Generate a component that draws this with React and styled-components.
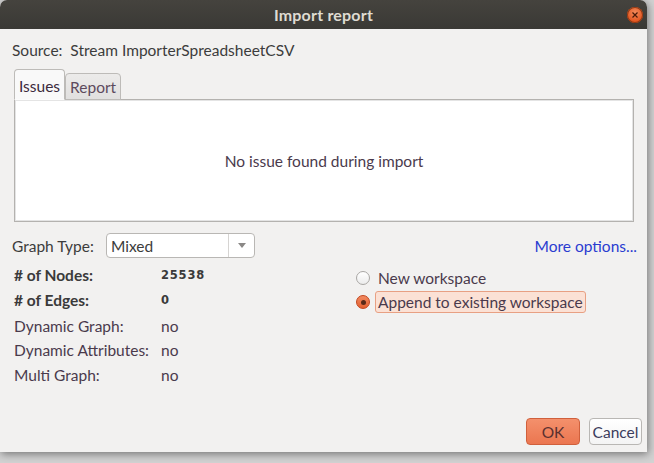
import React from "react";
import styled, { createGlobalStyle } from "styled-components";

const GlobalStyle = createGlobalStyle`
  html, body {
    margin: 0;
    padding: 0;
    background: #d2d2d2;
  }
  body {
    width: 654px;
    height: 463px;
    overflow: hidden;
    font-family: "Lato", "Noto Sans", sans-serif;
    color: #3c3c3c;
  }
`;

const Window = styled.div`
  width: 647px;
  height: 452px;
  display: flex;
  flex-direction: column;
  background: #f2f1f0;
  border-radius: 7px 7px 0 0;
  overflow: hidden;
  box-shadow: 1px 2px 8px rgba(0, 0, 0, 0.45);
`;

const TitleBar = styled.div`
  position: relative;
  height: 29px;
  flex: none;
  display: flex;
  align-items: center;
  justify-content: center;
  background: linear-gradient(#45433e, #3a3935);
  color: #dfdbd2;
  font-weight: 700;
  font-size: 16px;
  letter-spacing: 0.2px;
`;

const CloseButton = styled.div`
  position: absolute;
  right: 4px;
  top: 7px;
  width: 16px;
  height: 16px;
  border-radius: 50%;
  background: radial-gradient(circle at 50% 35%, #f28b5c, #e3541e 70%);
  box-shadow: 0 0 0 1px #8d3a16 inset;
  display: flex;
  align-items: center;
  justify-content: center;
`;

const Body = styled.div`
  flex: 1;
  display: flex;
  flex-direction: column;
  padding: 12px 5px 7px 12px;
  font-size: 15.5px;
`;

const Source = styled.div`
  height: 18px;
  line-height: 18px;
`;

const TabBar = styled.div`
  display: flex;
  align-items: flex-end;
  margin: 9px 0 0 2px;
  height: 31px;
`;

const Tab = styled.div`
  height: ${(p) => (p.active ? "31px" : "27px")};
  padding: 0 4px;
  display: flex;
  align-items: center;
  padding-top: ${(p) => (p.active ? "2px" : "0")};
  box-sizing: border-box;
  border: 1px solid #bdbbb8;
  border-bottom: ${(p) => (p.active ? "1px solid #fbfbfb" : "1px solid #bdbbb8")};
  border-radius: 4px 4px 0 0;
  background: ${(p) => (p.active ? "#f9f9f9" : "linear-gradient(#ecebea, #e1e0df)")};
  color: ${(p) => (p.active ? "#3c2a3c" : "#5d4a5d")};
  margin-bottom: -1px;
  z-index: ${(p) => (p.active ? 1 : 0)};
`;

const Panel = styled.div`
  margin-left: 2px;
  width: 620px;
  height: 123px;
  box-sizing: border-box;
  background: #ffffff;
  border: 1px solid #b4b2af;
  box-shadow: inset 0 0 0 1px #e4e4e4;
  display: flex;
  align-items: center;
  justify-content: center;
  color: #4a3a4c;
`;

const TypeRow = styled.div`
  display: flex;
  align-items: center;
  margin-top: 11px;
  height: 25px;
`;

const TypeLabel = styled.span`
  width: 94px;
`;

const Combo = styled.div`
  width: 149px;
  height: 25px;
  box-sizing: border-box;
  display: flex;
  background: #fff;
  border: 1px solid #b9b7b4;
  border-radius: 4px;
`;

const ComboText = styled.div`
  flex: 1;
  padding-left: 4px;
  display: flex;
  align-items: center;
  border-right: 1px solid #d6d4d2;
`;

const ComboArrow = styled.div`
  width: 25px;
  display: flex;
  align-items: center;
  justify-content: center;
`;

const MoreLink = styled.a`
  margin-left: auto;
  margin-right: 5px;
  color: #2a3cd0;
  text-decoration: none;
`;

const InfoArea = styled.div`
  display: flex;
  margin-top: 5px;
`;

const InfoGrid = styled.div`
  margin-left: 2px;
  width: 342px;
  display: grid;
  grid-template-columns: 147px 1fr;
  grid-auto-rows: 24.5px;
  align-items: center;
`;

const Label = styled.span`
  font-weight: ${(p) => (p.bold ? 700 : 400)};
  color: ${(p) => (p.bold ? "#3a3a3a" : "#4a3a4c")};
  margin-top: ${(p) => p.shift || 0}px;
`;

const Value = styled.span`
  font-weight: ${(p) => (p.bold ? 700 : 400)};
  font-size: ${(p) => (p.bold ? "11.5px" : "15.5px")};
  letter-spacing: ${(p) => (p.bold ? "0.8px" : "0")};
  font-family: ${(p) => (p.bold ? '"DejaVu Sans", sans-serif' : "inherit")};
  color: ${(p) => (p.bold ? "#3a3a3a" : "#4a3a4c")};
  margin-top: ${(p) => p.shift || 0}px;
`;

const RadioGroup = styled.div`
  display: flex;
  flex-direction: column;
  gap: 2px;
  padding-top: 4px;
`;

const RadioRow = styled.label`
  display: flex;
  align-items: center;
  height: 22px;
`;

const RadioDot = styled.span`
  width: 14px;
  height: 14px;
  box-sizing: border-box;
  border-radius: 50%;
  margin-right: 7px;
  flex: none;
  display: flex;
  align-items: center;
  justify-content: center;
  border: 1px solid ${(p) => (p.checked ? "#c2451d" : "#a9a7a4")};
  background: ${(p) => (p.checked ? "linear-gradient(#f28a62, #e3602f)" : "linear-gradient(#ffffff, #ececec)")};

  &::after {
    content: "";
    display: ${(p) => (p.checked ? "block" : "none")};
    width: 5px;
    height: 5px;
    border-radius: 50%;
    background: #5a2a18;
  }
`;

const RadioText = styled.span`
  padding: 1px 2px;
  margin-left: -2px;
  border-radius: 3px;
  color: #4a3a4c;
  border: 1px solid ${(p) => (p.focused ? "#e8a083" : "transparent")};
  background: ${(p) => (p.focused ? "#fbe1d5" : "transparent")};
`;

const Footer = styled.div`
  margin-top: auto;
  display: flex;
  justify-content: flex-end;
  gap: 9px;
`;

const Button = styled.button`
  height: 27px;
  width: ${(p) => (p.primary ? "54px" : "53px")};
  padding: 0;
  font-family: inherit;
  font-size: 15.5px;
  border-radius: 4px;
  border: 1px solid ${(p) => (p.primary ? "#d0603c" : "#b9b7b4")};
  background: ${(p) => (p.primary ? "linear-gradient(#f4906c, #eb7650)" : "linear-gradient(#ffffff, #f4f4f4)")};
  color: ${(p) => (p.primary ? "#5a3030" : "#3c3c5c")};
`;

function App() {
  return (
    <>
      <GlobalStyle />
      <Window>
        <TitleBar>
          Import report
          <CloseButton>
            <svg width="8" height="8" viewBox="0 0 8 8">
              <path d="M1.5 1.5 L6.5 6.5 M6.5 1.5 L1.5 6.5" stroke="#4a1a08" strokeWidth="1.2" />
            </svg>
          </CloseButton>
        </TitleBar>
        <Body>
          <Source>Source:&nbsp; Stream ImporterSpreadsheetCSV</Source>
          <TabBar>
            <Tab active>Issues</Tab>
            <Tab>Report</Tab>
          </TabBar>
          <Panel>No issue found during import</Panel>
          <TypeRow>
            <TypeLabel>Graph Type:</TypeLabel>
            <Combo>
              <ComboText>Mixed</ComboText>
              <ComboArrow>
                <svg width="8" height="5" viewBox="0 0 8 5">
                  <path d="M0 0 L8 0 L4 5 Z" fill="#8a8886" />
                </svg>
              </ComboArrow>
            </Combo>
            <MoreLink href="#">More options...</MoreLink>
          </TypeRow>
          <InfoArea>
            <InfoGrid>
              <Label bold># of Nodes:</Label>
              <Value bold>25538</Value>
              <Label bold># of Edges:</Label>
              <Value bold>0</Value>
              <Label shift={3}>Dynamic Graph:</Label>
              <Value shift={3}>no</Value>
              <Label shift={3}>Dynamic Attributes:</Label>
              <Value shift={3}>no</Value>
              <Label shift={3}>Multi Graph:</Label>
              <Value shift={3}>no</Value>
            </InfoGrid>
            <RadioGroup>
              <RadioRow>
                <RadioDot />
                <RadioText>New workspace</RadioText>
              </RadioRow>
              <RadioRow>
                <RadioDot checked />
                <RadioText focused>Append to existing workspace</RadioText>
              </RadioRow>
            </RadioGroup>
          </InfoArea>
          <Footer>
            <Button primary>OK</Button>
            <Button>Cancel</Button>
          </Footer>
        </Body>
      </Window>
    </>
  );
}

export default App;
